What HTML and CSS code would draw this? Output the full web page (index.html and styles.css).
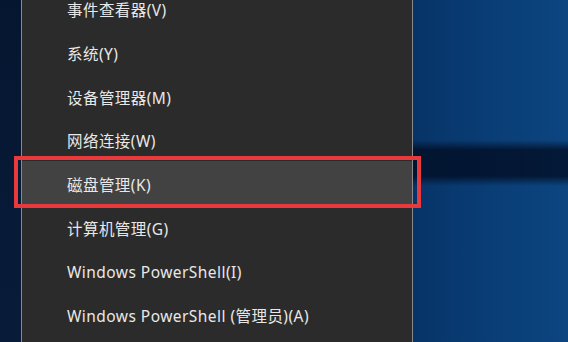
FILE: index.html
```html
<!DOCTYPE html>
<html lang="zh-CN">
<head>
    <meta charset="UTF-8">
    <title>快速链接菜单</title>
    <link rel="stylesheet" href="styles.css">
</head>
<body>
    <div class="screen">
        <div class="edge"></div>

        <!-- Win+X 菜单 -->
        <ul class="menu">
            <li class="item">事件查看器(V)</li>
            <li class="item">系统(Y)</li>
            <li class="item">设备管理器(M)</li>
            <li class="item">网络连接(W)</li>
            <li class="item active">磁盘管理(K)</li>
            <li class="item">计算机管理(G)</li>
            <li class="item">Windows PowerShell(I)</li>
            <li class="item">Windows PowerShell (管理员)(A)</li>
        </ul>

        <div class="desktop"></div>
    </div>
</body>
</html>
```

FILE: styles.css
```css
html, body {
    margin: 0;
    height: 100%;
}

body {
    font-family: "Noto Sans", "Noto Sans CJK SC", sans-serif;
    overflow: hidden;
}

.screen {
    display: flex;
    height: 342px;
}

.edge {
    width: 21px;
    background: linear-gradient(to bottom, #051630, #081c3a);
}

.menu {
    list-style: none;
    margin: 0;
    padding: 0;
    width: 390px;
    background: #2b2b2b;
    border-left: 1px solid #8a8a8a;
    border-right: 1px solid #8a8a8a;
    overflow: visible;
}

.item {
    position: relative;
    box-sizing: border-box;
    height: 43.7px;
    padding: 4px 0 0 45px;
    display: flex;
    align-items: center;
    color: #e8e8e8;
    font-size: 15.5px;
    letter-spacing: 0.45px;
}

.item:first-child {
    margin-top: -14px;
}

.item.active {
    background: #424242;
}

/* 红色标注框 */
.item.active::after {
    content: "";
    position: absolute;
    top: -5px;
    bottom: -4px;
    left: -8px;
    right: -9px;
    border: 4px solid #e8393c;
}

.desktop {
    flex: 1;
    background:
        linear-gradient(to bottom,
            transparent 0, transparent 140px,
            rgba(0, 10, 30, 0.75) 150px, rgba(0, 10, 30, 0.75) 176px,
            transparent 186px),
        linear-gradient(to right, #073468, #0a3f78 60%, #0c4580);
}
```
